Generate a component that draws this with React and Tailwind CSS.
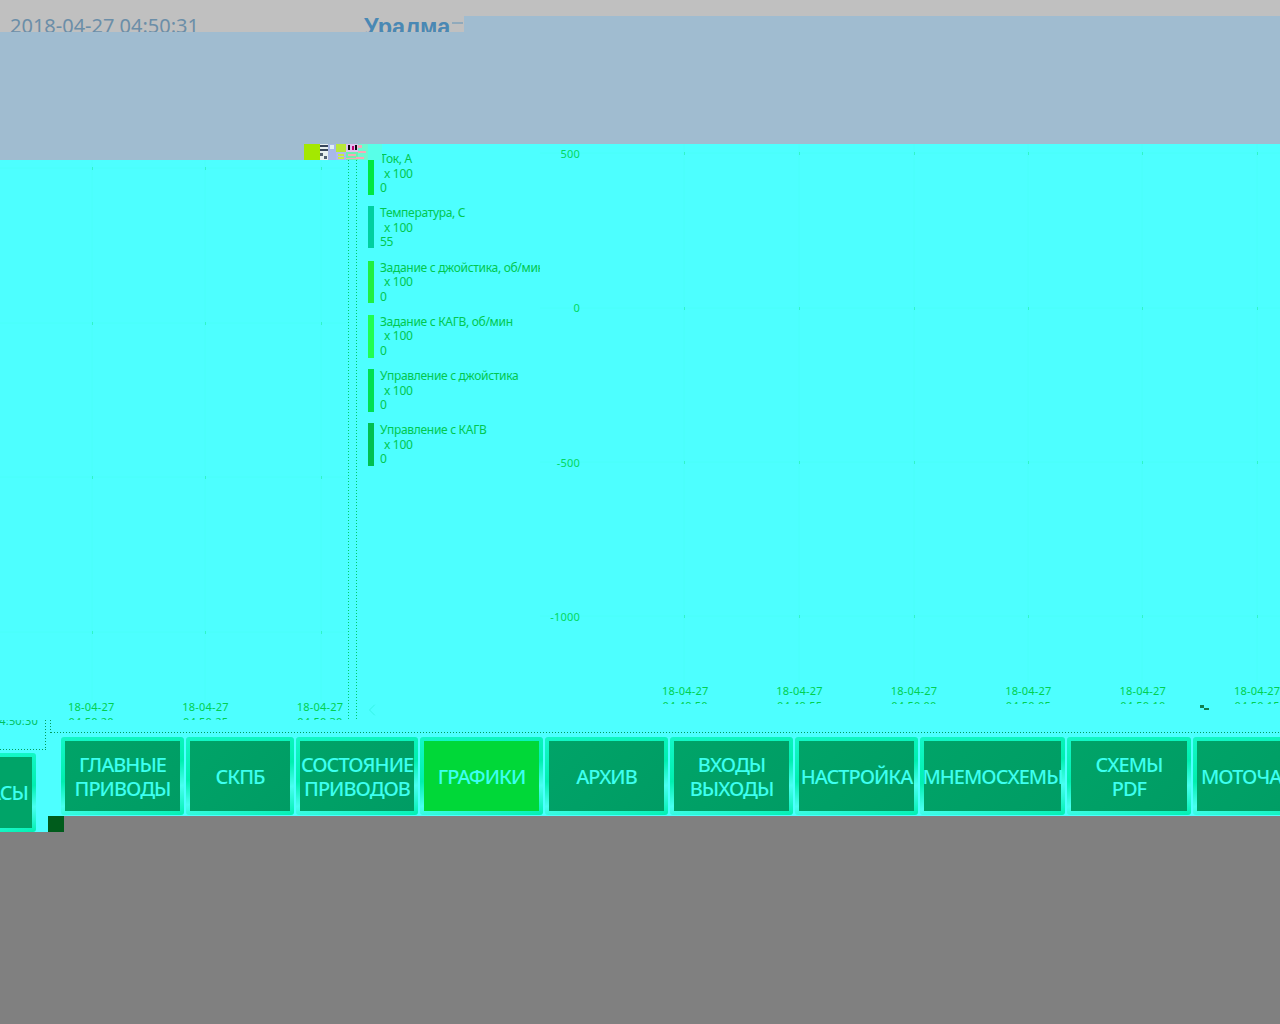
import { ChevronLeft } from "lucide-react";

const legend = [
    { name: "Ток, А", value: "0", bar: "bg-[#00e840]", barClass: "mt-[8px] h-[35px]" },
    { name: "Температура, С", value: "55", bar: "bg-[#00d0a0]", barClass: "h-[42px]" },
    { name: "Задание с джойстика, об/мин", value: "0", bar: "bg-[#20f040]", barClass: "h-[42px]" },
    { name: "Задание с КАГВ, об/мин", value: "0", bar: "bg-[#20ff50]", barClass: "h-[43px]" },
    { name: "Управление с джойстика", value: "0", bar: "bg-[#00e050]", barClass: "h-[43px]" },
    { name: "Управление с КАГВ", value: "0", bar: "bg-[#00c050]", barClass: "h-[43px]" },
];

const buttons = [
    { lines: ["ГЛАВНЫЕ", "ПРИВОДЫ"], w: "w-[123px]" },
    { lines: ["СКПБ"], w: "w-[108px]" },
    { lines: ["СОСТОЯНИЕ", "ПРИВОДОВ"], w: "w-[122px]" },
    { lines: ["ГРАФИКИ"], w: "w-[123px]", active: true },
    { lines: ["АРХИВ"], w: "w-[123px]" },
    { lines: ["ВХОДЫ", "ВЫХОДЫ"], w: "w-[123px]" },
    { lines: ["НАСТРОЙКА"], w: "w-[123px]" },
    { lines: ["МНЕМОСХЕМЫ"], w: "w-[145px]" },
    { lines: ["СХЕМЫ", "PDF"], w: "w-[124px]" },
    { lines: ["МОТОЧАСЫ"], w: "w-[124px]" },
];

const leftTimes = ["04:50:20", "04:50:25", "04:50:30"];
const rightTimes = ["04:49:50", "04:49:55", "04:50:00", "04:50:05", "04:50:10", "04:50:15"];

const dots = "bg-[#a0bcd0] bg-[radial-gradient(#b6cedd_0.7px,transparent_0.7px)] bg-[size:8px_8px]";
const vDots = "w-px shrink-0 bg-[linear-gradient(#00c868_1px,transparent_1px)] bg-[size:1px_3px]";
const vDotsDark = "w-px shrink-0 bg-[linear-gradient(#009c5c_1px,transparent_1px)] bg-[size:1px_3px]";
const hDotsDark = "h-px bg-[linear-gradient(90deg,#009c5c_1px,transparent_1px)] bg-[size:3px_1px]";
const edge = "bg-[linear-gradient(170deg,#14f8c8_0%,#00f0b0_45%,#48fff0_70%,#00f0b0_100%)]";

function Grid({ xs, ys, height }) {
    return (
        <svg className="absolute inset-0 w-full h-full" aria-hidden="true">
            {xs.map((x) => (
                <line key={x} x1={x} x2={x} y1="0" y2={height} stroke="#4afffa" />
            ))}
            {ys.map((y) => (
                <line key={y} x1="0" x2="100%" y1={y} y2={y} stroke="#4afffa" />
            ))}
            {xs.map((x) =>
                ys.map((y) => (
                    <rect key={x + "-" + y} x={x} y={y - 1} width="1" height="3" fill="#30f4c8" />
                ))
            )}
        </svg>
    );
}

function TimeLabel({ time }) {
    return (
        <div className="w-[114.4px] shrink-0 text-center text-[11px] leading-[14.5px] text-[#00d050] tracking-[0.2px]">
            18-04-27
            <br />
            {time}
        </div>
    );
}

function NoiseBlock() {
    return (
        <svg width="64" height="16" className="block shrink-0" aria-hidden="true">
            <rect width="16" height="16" fill="#a4e800" />
            <rect x="16" width="8" height="16" fill="#e8f0f0" />
            <rect x="16" y="1" width="8" height="2" fill="#38485c" />
            <rect x="16" y="5" width="8" height="2" fill="#38485c" />
            <rect x="16" y="9" width="3" height="3" fill="#506070" />
            <rect x="20" y="12" width="3" height="3" fill="#506070" />
            <rect x="24" width="8" height="16" fill="#a8b8e8" />
            <rect x="26" y="1" width="4" height="4" fill="#e0f0f0" />
            <rect x="32" width="10" height="8" fill="#b8e838" />
            <rect x="32" y="8" width="10" height="8" fill="#b0b8f0" />
            <rect x="34" y="10" width="6" height="2" fill="#c8f040" />
            <rect x="34" y="13" width="6" height="2" fill="#c8f040" />
            <rect x="42" width="12" height="8" fill="#e0c0f0" />
            <rect x="44" y="1" width="2" height="5" fill="#101010" />
            <rect x="48" y="2" width="2" height="4" fill="#c00070" />
            <rect x="51" y="1" width="2" height="5" fill="#101010" />
            <rect x="42" y="8" width="12" height="8" fill="#70f0b0" />
            <rect x="44" y="10" width="8" height="2" fill="#f8a8b8" />
            <rect x="42" y="14" width="10" height="1" fill="#f8a8b8" />
            <rect x="54" width="10" height="16" fill="#70f8d0" />
            <rect x="54" y="1" width="4" height="3" fill="#f8a8b8" />
            <rect x="54" y="7" width="8" height="2" fill="#f8a8b8" />
            <rect x="52" y="13" width="8" height="2" fill="#f8a8b8" />
        </svg>
    );
}

function NavButton({ lines, w, active }) {
    return (
        <div className={w + " h-[78px] shrink-0 p-1 rounded-[3px] " + edge}>
            <div className={"h-full pt-px flex flex-col items-center justify-center text-[20px] font-medium leading-6 tracking-[-1px] text-[#3dfff0] whitespace-nowrap " + (active ? "bg-[#00d838]" : "bg-[linear-gradient(135deg,#00a468,#009c64)]")}>
                {lines.map((line) => (
                    <div key={line}>{line}</div>
                ))}
            </div>
        </div>
    );
}

export default function App() {
    return (
        <div className="w-[1280px] h-[1024px] overflow-hidden bg-[#808080] font-['Noto_Sans',sans-serif]">
            <div className="h-4 bg-[#c0c0c0]" />

            {/* clipped title row */}
            <div className="h-4 flex">
                <div className="w-[464px] h-4 overflow-hidden bg-[#c0c0c0] flex items-start">
                    <div className="w-[364px] pl-[10px] -mt-[6px] text-[20px] leading-[32px] text-[#6b8ea8] whitespace-nowrap">
                        2018-04-27 04:50:31
                    </div>
                    <div className="-mt-[5px] font-['Liberation_Sans',sans-serif] font-bold text-[23.5px] leading-[32px] text-[#4a88b4] whitespace-nowrap">
                        Уралма
                    </div>
                    <div className="ml-[2px] mt-[6px] w-[11px] h-[2px] bg-[#90aabc]" />
                </div>
                <div className={"flex-1 " + dots} />
            </div>

            <div className={"h-[112px] " + dots} />

            <div className="h-[576px] flex">
                {/* left chart */}
                <div className="w-[368px] shrink-0 flex flex-col">
                    <div className="h-4 flex">
                        <div className={"w-[304px] " + dots} />
                        <NoiseBlock />
                    </div>
                    <div className="h-[560px] flex bg-[#4dffff]">
                        <div className="relative w-[348px] h-full overflow-hidden">
                            <Grid xs={[92, 205, 321]} ys={[8, 163, 317, 472]} height={540} />
                            <div className="relative pt-[540px] pl-[34px] flex h-[560px]">
                                {leftTimes.map((t) => (
                                    <TimeLabel key={t} time={t} />
                                ))}
                            </div>
                        </div>
                        <div className={vDots} />
                        <div className="w-[7px]" />
                        <div className={vDots} />
                    </div>
                </div>

                {/* legend */}
                <div className="relative w-[172px] shrink-0 overflow-hidden bg-[#4dffff] pt-[8px] text-[12px] leading-[14.5px] tracking-[-0.3px] text-[#00c850]">
                    {legend.map((item) => (
                        <div key={item.name} className="flex mb-[10.8px] h-[43.5px]">
                            <div className={"w-[6px] shrink-0 " + item.bar + " " + item.barClass} />
                            <div className="pl-[6px] whitespace-nowrap">
                                <div>{item.name}</div>
                                <div className="pl-1">x 100</div>
                                <div>{item.value}</div>
                            </div>
                        </div>
                    ))}
                    <div className="absolute left-0 top-0 w-[14px] h-4 bg-[#58ffe8]" />
                    <ChevronLeft size={20} strokeWidth={1} className="absolute left-[-6px] top-[556px] text-[#30f0e0]" />
                </div>

                {/* right chart */}
                <div className="relative flex-1 bg-[#4dffff] overflow-hidden">
                    <Grid xs={[144, 259, 374, 488, 602, 717]} ys={[9, 164, 318, 472]} height={541} />
                    <div className="relative flex h-full">
                        <div className="w-10 shrink-0 pt-[2px] text-right text-[11px] leading-4 tracking-[0.2px] text-[#00d860]">
                            {["500", "0", "-500", "-1000"].map((v) => (
                                <div key={v} className="h-[154.4px]">{v}</div>
                            ))}
                        </div>
                        <div className="flex-1 pt-[540px] pl-[48px]">
                            <div className="h-5 flex overflow-hidden">
                                {rightTimes.map((t) => (
                                    <TimeLabel key={t} time={t} />
                                ))}
                            </div>
                        </div>
                    </div>
                    <svg width="9" height="6" className="absolute left-[660px] top-[561px]" aria-hidden="true">
                        <rect width="4" height="3" fill="#108050" />
                        <rect x="4" y="3" width="5" height="2" fill="#108050" />
                    </svg>
                </div>
            </div>

            {/* bottom nav */}
            <div className="h-[112px] flex">
                <div className="w-12 shrink-0 bg-[#4dffff]">
                    <div className="w-[46px]">
                        <div className="h-[29px] flex">
                            <div className="w-[45px] h-[29px] overflow-hidden flex justify-end pr-[7px]">
                                <div className="-mt-[6px] text-[11px] leading-[14px] tracking-[0.2px] text-[#00c060] whitespace-nowrap">04:50:30</div>
                            </div>
                            <div className={vDotsDark} />
                        </div>
                        <div className={hDotsDark} />
                    </div>
                    <div className={"mt-[3px] w-9 h-[79px] py-1 pr-1 rounded-r-[3px] " + edge}>
                        <div className="h-full overflow-hidden flex items-center justify-end pr-1 bg-[#00a468] text-[20px] font-medium tracking-[-1px] text-[#3dfff0] whitespace-nowrap">
                            <span className="shrink-0">МОТОЧАСЫ</span>
                        </div>
                    </div>
                </div>
                <div className="flex-1">
                    <div className="h-[96px] bg-[#4dffff] overflow-hidden">
                        <div className="ml-[2px] h-[13px] flex">
                            <div className={vDotsDark} />
                            <div className={"flex-1 self-end " + hDotsDark} />
                        </div>
                        <div className="mt-1 ml-[13px] flex gap-[2px]">
                            {buttons.map((b) => (
                                <NavButton key={b.lines[0]} {...b} />
                            ))}
                        </div>
                    </div>
                    <div className="w-4 h-4 bg-[#005c1c]" />
                </div>
            </div>
        </div>
    );
}
